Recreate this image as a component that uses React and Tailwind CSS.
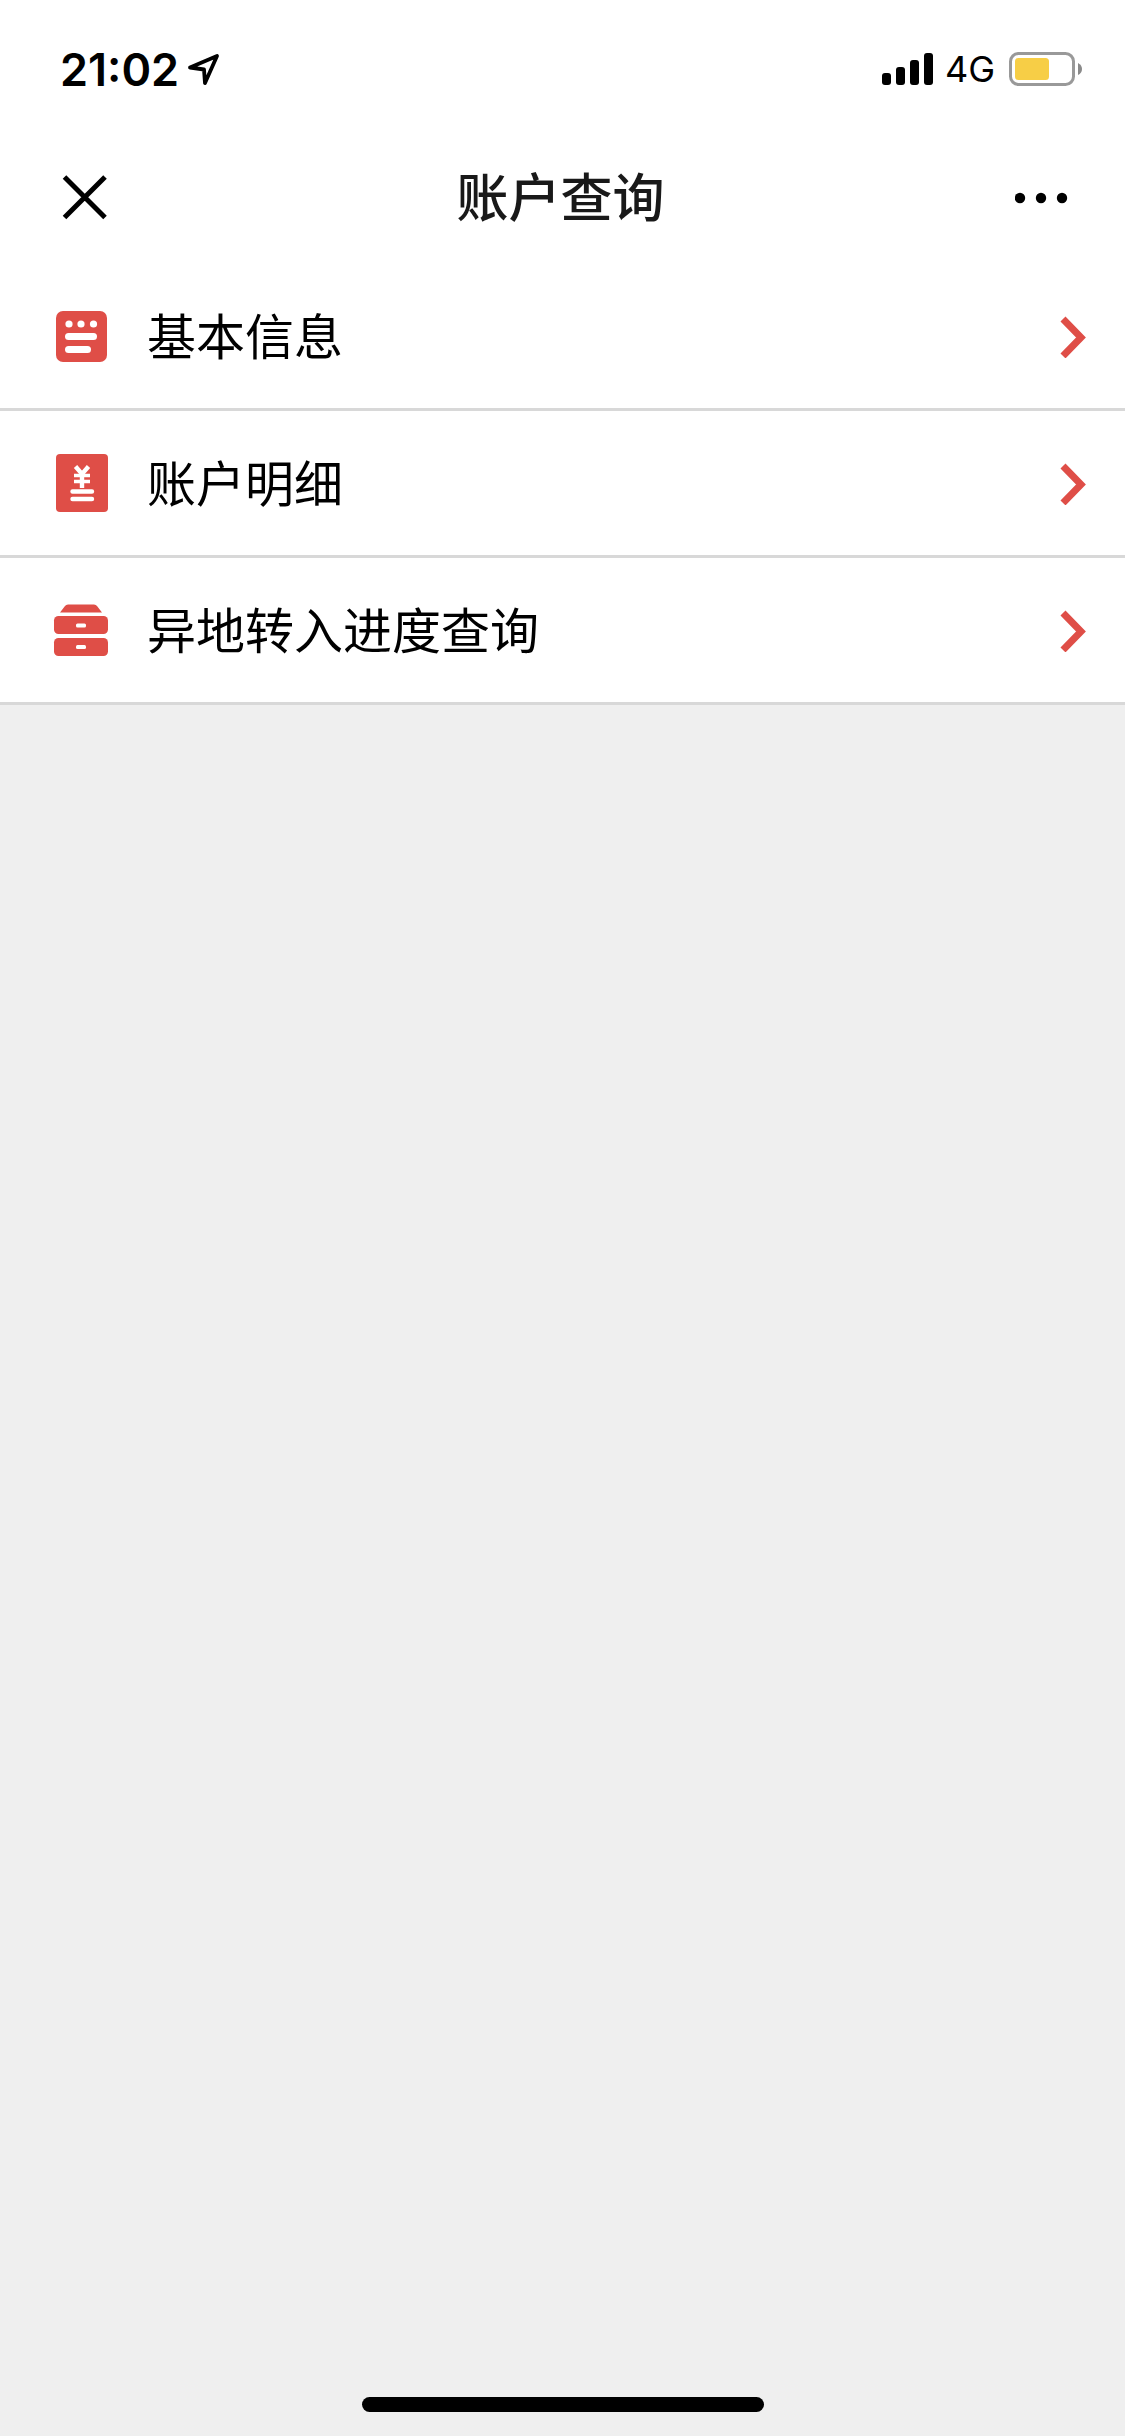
import React from "react";

const InfoIcon = () => (
  <svg width="56" height="60" viewBox="0 0 56 60" fill="white" aria-hidden="true">
    <rect x="3" y="5" width="51" height="51" rx="7" fill="#df4e47" />
    <circle cx="16" cy="18" r="3.6" />
    <circle cx="28" cy="18" r="3.6" />
    <circle cx="40.5" cy="18" r="3.6" />
    <rect x="12" y="27" width="32" height="7" rx="3.5" />
    <rect x="12" y="40" width="26" height="7" rx="3.5" />
  </svg>
);

const DetailIcon = () => (
  <svg width="56" height="60" viewBox="0 0 56 60" fill="none" stroke="white" aria-hidden="true">
    <rect x="3" y="1" width="52" height="58" rx="4" fill="#df4e47" stroke="none" />
    <path d="M22.5 13.5L29 21L35.5 13.5M29 21V35" strokeWidth="4.4" />
    <path d="M21 22.5H37M21 28.5H37" strokeWidth="3.4" />
    <path d="M19.5 38.5H39M19.5 46H39" strokeWidth="4.4" strokeLinecap="round" />
  </svg>
);

const TransferIcon = () => (
  <svg width="56" height="60" viewBox="0 0 56 60" fill="#df4e47" aria-hidden="true">
    <path d="M7 12.5L12 6Q13 4.500 15 4.500H41Q43 4.500 44 6L49 12.5Z" />
    <rect x="1" y="16" width="54" height="18" rx="4.5" />
    <rect x="1" y="38" width="54" height="18" rx="4.5" />
    <rect x="23" y="23.5" width="10" height="4" rx="1.5" fill="white" />
    <rect x="23" y="45" width="10" height="4" rx="1.5" fill="white" />
  </svg>
);

const menus = [
  { id: 1, title: "基本信息", icon: InfoIcon },
  { id: 2, title: "账户明细", icon: DetailIcon },
  { id: 3, title: "异地转入进度查询", icon: TransferIcon },
];

const StatusBar = () => (
  <div className="flex h-[138px] items-center justify-between pl-[60px] pr-[43px] font-['Inter',sans-serif] text-black">
    <div className="flex items-center gap-2">
      <span className="text-[45px] leading-none font-semibold">21:02</span>
      <svg width="34" height="34" viewBox="0 0 34 34" fill="none" aria-hidden="true">
        <path
          d="M3 15.500L30 4L18 31L17 17.500Z"
          stroke="black"
          strokeWidth="3.8"
          strokeLinejoin="round"
        />
      </svg>
    </div>

    <div className="flex items-center">
      <svg width="51" height="32" viewBox="0 0 51 32" aria-hidden="true">
        <rect x="0" y="20" width="9" height="12" rx="3" />
        <rect x="14" y="14" width="9" height="18" rx="3" />
        <rect x="28" y="7" width="9" height="25" rx="3" />
        <rect x="42" y="0" width="9" height="32" rx="3" />
      </svg>
      <span className="ml-3 text-[36px] leading-none">4G</span>
      <svg className="ml-[14px]" width="73" height="34" viewBox="0 0 73 34" fill="none" aria-hidden="true">
        <rect x="1.5" y="1.5" width="63" height="31" rx="8" stroke="#999" strokeWidth="3" />
        <rect x="6" y="6" width="34" height="22" rx="3.5" fill="#f7ce46" />
        <path d="M69 11Q73 13 73 17T69 23Z" fill="#8a8a8a" />
      </svg>
    </div>
  </div>
);

const App = () => {
  return (
    <div className="flex min-h-screen flex-col bg-[#efefef] font-['Noto_Sans_CJK_SC',sans-serif]">
      <div className="bg-white">
        <StatusBar />

        <header className="flex h-[126px] items-center justify-between pb-[6px] pl-[60px] pr-[54px]">
          <button aria-label="关闭">
            <svg width="50" height="50" viewBox="0 0 50 50" fill="none" aria-hidden="true">
              <path d="M4.5 4L45 44.5M45 4L4.5 44.5" stroke="black" strokeWidth="5" />
            </svg>
          </button>
          <h1 className="pr-1 pb-[6px] text-[52px] leading-none font-medium text-[#191919]">账户查询</h1>
          <button aria-label="更多">
            <svg width="56" height="50" viewBox="0 0 56 50" aria-hidden="true">
              <circle cx="5" cy="25" r="5.2" />
              <circle cx="26" cy="25" r="5.2" />
              <circle cx="47" cy="25" r="5.2" />
            </svg>
          </button>
        </header>

        <nav>
          {menus.map((m) => (
            <a
              key={m.id}
              href="#"
              className="flex h-[147px] items-center border-b-3 border-[#d8d8d8] pl-[53px] pr-[38px] text-black"
            >
              <m.icon />
              <span className="ml-[38px] flex-1 pb-[6px] text-[49px] leading-none">{m.title}</span>
              <svg width="28" height="44" viewBox="0 0 28 44" fill="none" aria-hidden="true">
                <path d="M4 5L22 23.5L4 42" stroke="#df4e47" strokeWidth="7" />
              </svg>
            </a>
          ))}
        </nav>
      </div>

      {/* home indicator */}
      <div className="mx-auto mt-auto mb-6 h-[15px] w-[402px] rounded-full bg-black" />
    </div>
  );
};

export default App;
